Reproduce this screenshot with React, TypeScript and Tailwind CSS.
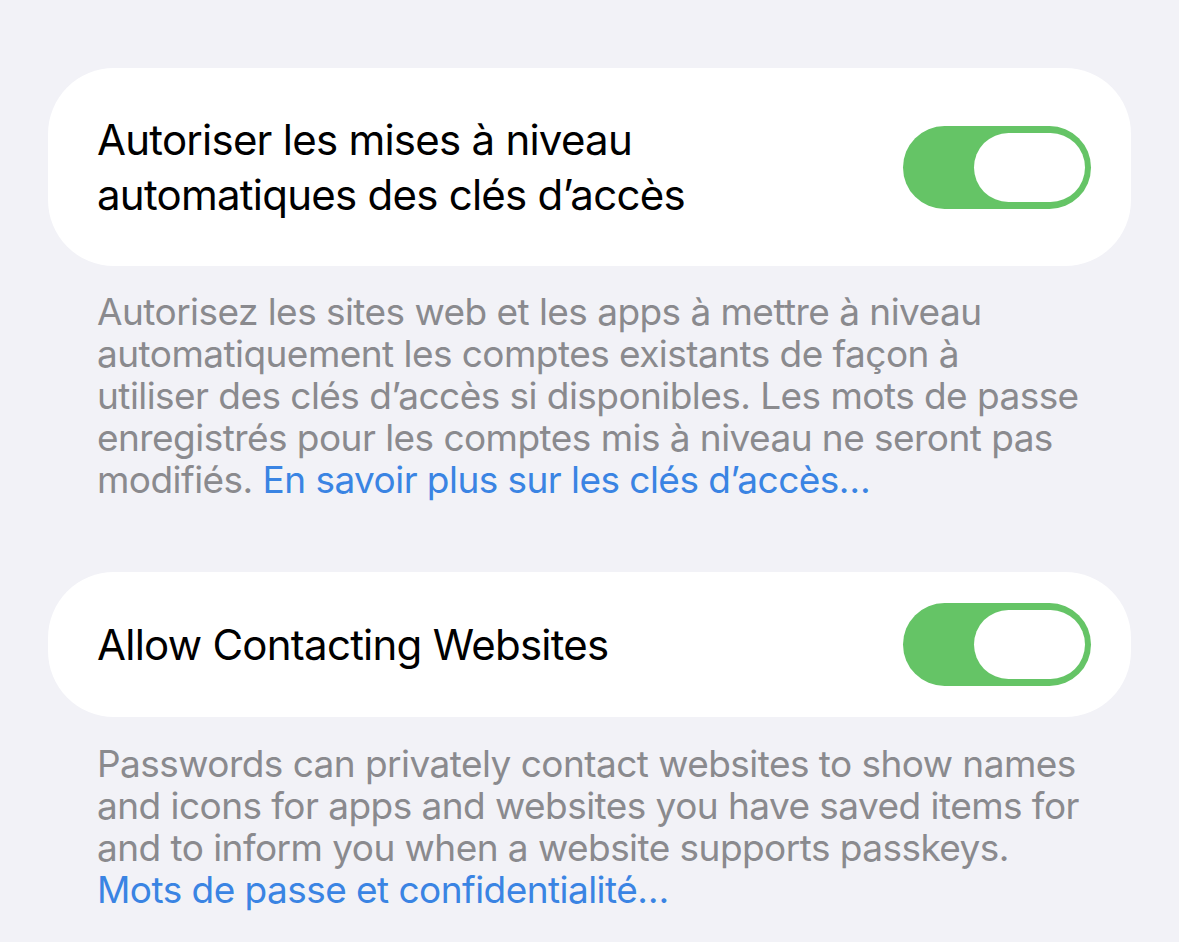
import React from "react";

function Toggle() {
  return (
    <div className="w-[188px] h-[83px] shrink-0 rounded-full bg-[#65C466] flex items-center justify-end pr-[6px]">
      <div className="w-[111px] h-[69px] rounded-full bg-white" />
    </div>
  );
}

export default function App() {
  return (
    <div
      className="w-[1179px] h-[942px] bg-[#F2F2F7] px-[48px] pt-[68px] overflow-hidden"
      style={{ fontFamily: "Inter, 'Noto Sans', sans-serif" }}
    >
      <div className="h-[198px] bg-white rounded-[66px] flex items-center justify-between pl-[49px] pr-[40px]">
        <div className="text-[42px] leading-[55px] text-black tracking-[-0.75px]">
          <div>Autoriser les mises à niveau</div>
          <div>automatiques des clés d’accès</div>
        </div>
        <Toggle />
      </div>
      <div className="mt-[25px] pl-[49px] text-[37px] leading-[42px] text-[#8A8A8E] tracking-[-0.55px]">
        <div>Autorisez les sites web et les apps à mettre à niveau</div>
        <div>automatiquement les comptes existants de façon à</div>
        <div>utiliser des clés d’accès si disponibles. Les mots de passe</div>
        <div>enregistrés pour les comptes mis à niveau ne seront pas</div>
        <div>
          modifiés. <span className="text-[#3A84E3]">En savoir plus sur les clés d’accès…</span>
        </div>
      </div>
      <div className="mt-[71px] h-[145px] bg-white rounded-[66px] flex items-center justify-between pl-[49px] pr-[40px]">
        <div className="text-[42px] leading-[55px] text-black tracking-[-0.75px]">Allow Contacting Websites</div>
        <Toggle />
      </div>
      <div className="mt-[26px] pl-[49px] text-[37px] leading-[42px] text-[#8A8A8E] tracking-[-0.55px]">
        <div>Passwords can privately contact websites to show names</div>
        <div>and icons for apps and websites you have saved items for</div>
        <div>and to inform you when a website supports passkeys.</div>
        <div className="text-[#3A84E3]">Mots de passe et confidentialité…</div>
      </div>
    </div>
  );
}
